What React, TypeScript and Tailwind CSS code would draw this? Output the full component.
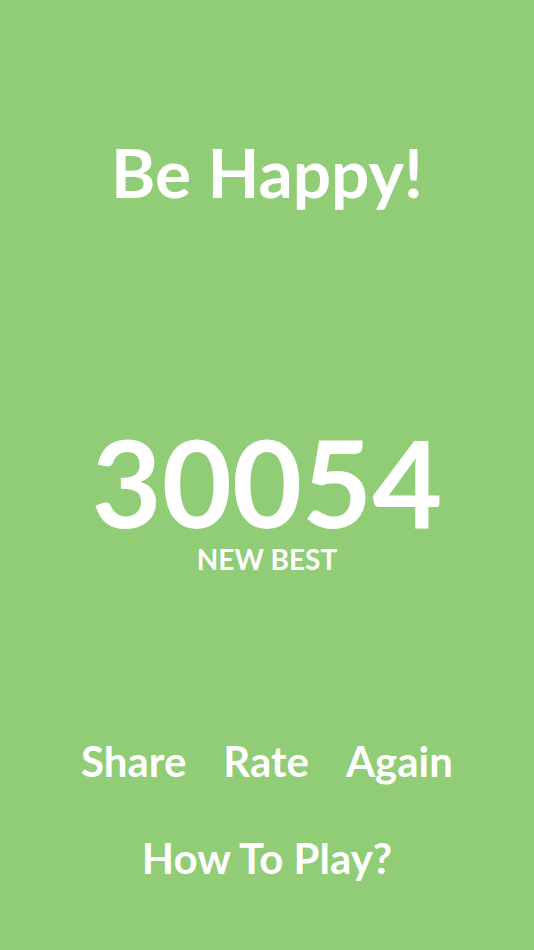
export default function App() {
  return (
    <div className="w-[534px] h-[950px] bg-[#90cd76] text-white flex flex-col items-center" style={{ fontFamily: "Lato, 'Open Sans', sans-serif" }}>
      <div className="mt-[132px] text-[67.5px] font-bold leading-[80px]">Be Happy!</div>
      <div className="mt-[211px] text-[121px] font-bold leading-[118px]">30054</div>
      <div className="text-[28px] font-bold leading-[36px]">NEW BEST</div>
      <div className="mt-[159px] flex gap-[37px] text-[42px] font-bold leading-[50px]">
        <span>Share</span>
        <span>Rate</span>
        <span>Again</span>
      </div>
      <div className="mt-[47px] text-[42px] font-bold leading-[50px]">How To Play?</div>
    </div>
  );
}
